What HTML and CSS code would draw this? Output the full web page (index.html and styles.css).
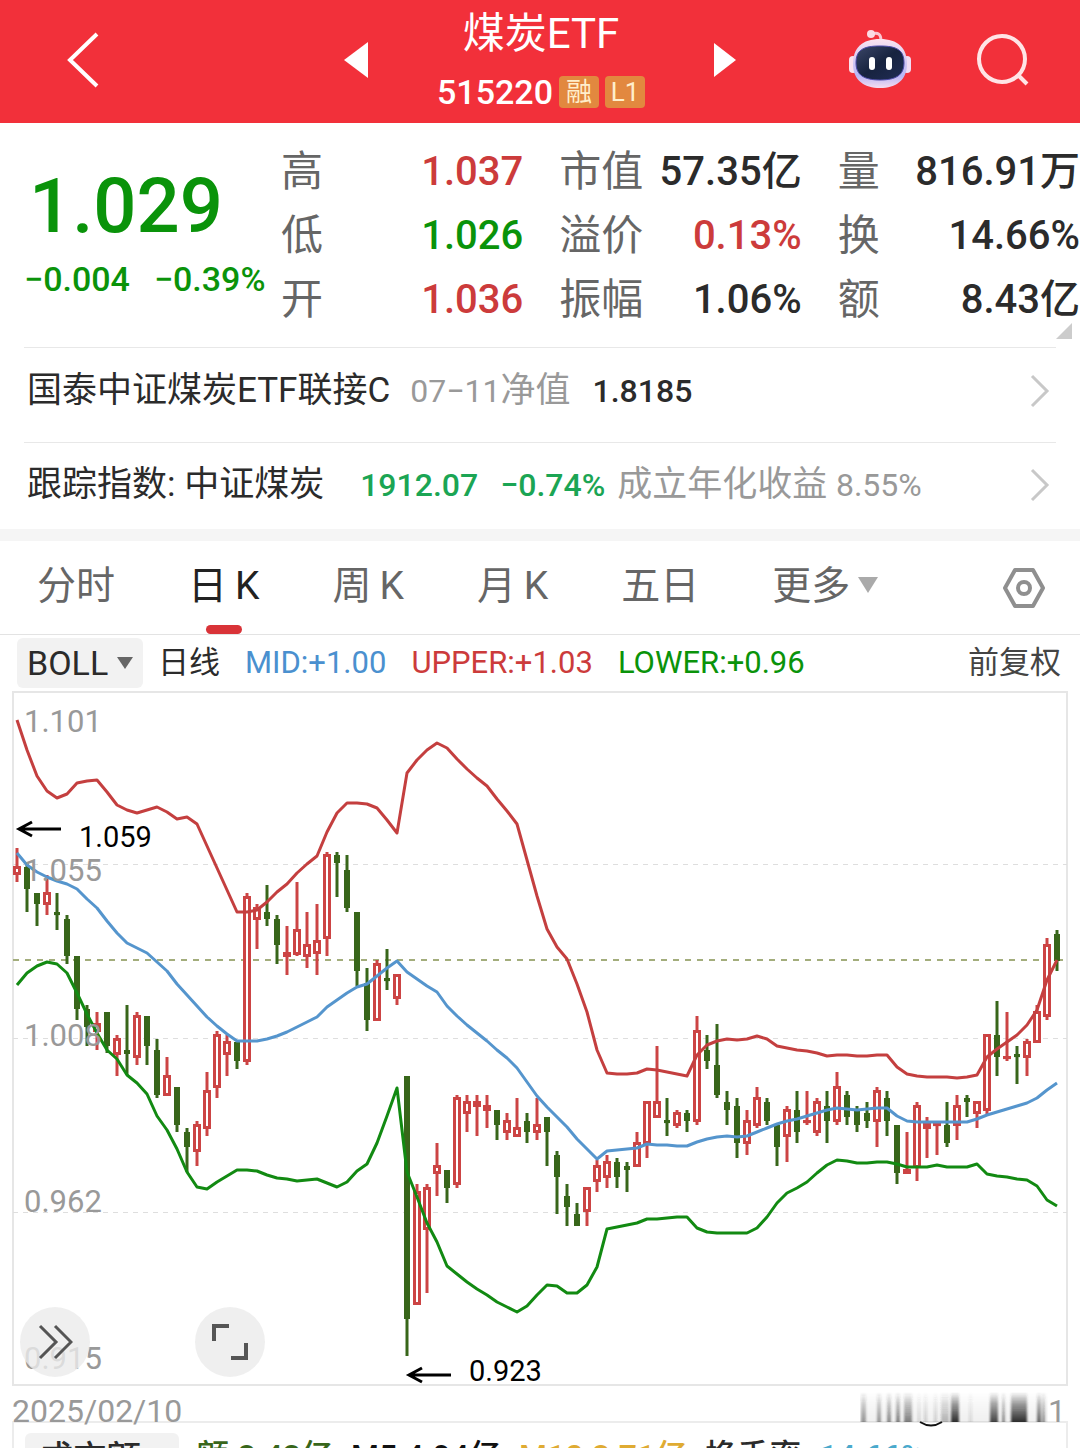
FILE: index.html
```html
<!DOCTYPE html>
<html lang="zh-CN">
<head>
    <meta charset="UTF-8">
    <meta name="viewport" content="width=device-width, initial-scale=1.0">
    <title>煤炭ETF 515220</title>
    <link rel="stylesheet" href="styles.css">
</head>
<body>
    <div class="app">
        <header class="header">
            <button class="icon-button back" aria-label="返回">
                <svg width="34" height="58" viewBox="0 0 34 58"><path d="M31 3 L4 29 L31 55" fill="none" stroke="#fff" stroke-width="4"/></svg>
            </button>
            <div class="switcher">
                <button class="icon-button" aria-label="上一只">
                    <svg width="24" height="36" viewBox="0 0 24 36"><path d="M0 18 L24 0 V36 Z" fill="#fff"/></svg>
                </button>
                <div class="title">
                    <h1>煤炭ETF</h1>
                    <div class="code">515220 <span class="tag">融</span><span class="tag">L1</span></div>
                </div>
                <button class="icon-button" aria-label="下一只">
                    <svg width="22" height="34" viewBox="0 0 22 34"><path d="M22 17 L0 0 V34 Z" fill="#fff"/></svg>
                </button>
            </div>
            <div class="actions">
                <button class="icon-button" aria-label="智能助手">
                    <svg width="64" height="60" viewBox="0 0 64 60">
                        <defs>
                            <linearGradient id="shell" x1="0" y1="0" x2="0" y2="1">
                                <stop offset="0" stop-color="#fbe3f0"/>
                                <stop offset="0.75" stop-color="#b9b6f5"/>
                                <stop offset="1" stop-color="#f6dcf0"/>
                            </linearGradient>
                            <linearGradient id="face" x1="0" y1="0" x2="1" y2="1">
                                <stop offset="0" stop-color="#3b4668"/>
                                <stop offset="0.5" stop-color="#17233f"/>
                                <stop offset="1" stop-color="#202c55"/>
                            </linearGradient>
                        </defs>
                        <path d="M24 4 C30 2 33 4 33 11" fill="none" stroke="#fbc6d2" stroke-width="3"/>
                        <circle cx="23" cy="4" r="4" fill="#fbdbe4"/>
                        <rect x="1" y="26" width="8" height="17" rx="4" fill="#fbe0ec"/>
                        <rect x="55" y="26" width="8" height="17" rx="4" fill="#f1dcf4"/>
                        <path d="M32 9 C50 9 59 18 59 34 C59 50 48 58 32 58 C16 58 5 50 5 34 C5 18 14 9 32 9 Z" fill="url(#shell)"/>
                        <path d="M32 16 C49 16 56 20 56 33 C56 45 48 50 32 50 C16 50 8 45 8 33 C8 20 15 16 32 16 Z" fill="url(#face)" stroke="#4c4aa8" stroke-width="1"/>
                        <rect x="21" y="27" width="6" height="13" rx="3" fill="#fff"/>
                        <rect x="38" y="27" width="6" height="13" rx="3" fill="#fff"/>
                    </svg>
                </button>
                <button class="icon-button" aria-label="搜索">
                    <svg width="54" height="54" viewBox="0 0 54 54"><circle cx="26" cy="26" r="23" fill="none" stroke="#ffe4e6" stroke-width="4"/><path d="M42 42 L51 51" stroke="#ffe4e6" stroke-width="4"/></svg>
                </button>
            </div>
        </header>

        <section class="quote">
            <div class="price down">
                <div class="last">1.029</div>
                <div class="change"><span>−0.004</span><span>−0.39%</span></div>
            </div>
            <dl class="stats">
                <div class="stat"><dt>高</dt><dd class="up">1.037</dd></div>
                <div class="stat"><dt>市值</dt><dd>57.35亿</dd></div>
                <div class="stat"><dt>量</dt><dd>816.91万</dd></div>
                <div class="stat"><dt>低</dt><dd class="down">1.026</dd></div>
                <div class="stat"><dt>溢价</dt><dd class="up">0.13%</dd></div>
                <div class="stat"><dt>换</dt><dd>14.66%</dd></div>
                <div class="stat"><dt>开</dt><dd class="up">1.036</dd></div>
                <div class="stat"><dt>振幅</dt><dd>1.06%</dd></div>
                <div class="stat"><dt>额</dt><dd>8.43亿</dd></div>
            </dl>
            <span class="corner"></span>
        </section>

        <section class="links">
            <a class="link" href="#fund">
                <span class="name">国泰中证煤炭ETF联接C</span>
                <span class="muted fund-date"><span class="num">07−11</span>净值</span>
                <span class="num fund-value">1.8185</span>
                <svg class="chevron" width="20" height="34" viewBox="0 0 20 34"><path d="M2 2 L17 17 L2 32" fill="none" stroke="#c8c8c8" stroke-width="3"/></svg>
            </a>
            <a class="link" href="#index">
                <span class="name">跟踪指数: 中证煤炭</span>
                <span class="num rise index-value">1912.07</span>
                <span class="num rise index-change">−0.74%</span>
                <span class="muted index-yield">成立年化收益 <span class="num">8.55%</span></span>
                <svg class="chevron" width="20" height="34" viewBox="0 0 20 34"><path d="M2 2 L17 17 L2 32" fill="none" stroke="#c8c8c8" stroke-width="3"/></svg>
            </a>
        </section>

        <nav class="tabs">
            <button class="tab">分时</button>
            <button class="tab active">日&thinsp;K</button>
            <button class="tab">周&thinsp;K</button>
            <button class="tab">月&thinsp;K</button>
            <button class="tab">五日</button>
            <button class="tab more">更多<span class="caret"></span></button>
            <button class="icon-button settings" aria-label="设置">
                <svg width="44" height="40" viewBox="0 0 44 40"><path d="M13 2 H31 L41 20 L31 38 H13 L3 20 Z" fill="none" stroke="#8f8f8f" stroke-width="4" stroke-linejoin="round"/><circle cx="22" cy="20" r="6" fill="none" stroke="#8f8f8f" stroke-width="4"/></svg>
            </button>
        </nav>

        <div class="indicator">
            <label class="picker">
                <select aria-label="指标"><option>BOLL</option><option>MA</option></select>
                <span class="caret dark"></span>
            </label>
            <span class="period">日线</span>
            <span class="mid">MID:+1.00</span>
            <span class="up">UPPER:+1.03</span>
            <span class="down">LOWER:+0.96</span>
            <button class="adjust">前复权</button>
        </div>

        <div class="chart">
            <svg id="kline" viewBox="0 691 1080 695"></svg>
            <button class="round expand" aria-label="展开">
                <svg width="36" height="36" viewBox="0 0 36 36"><path d="M3 2 L19 18 L3 34 M18 2 L34 18 L18 34" fill="none" stroke="#555" stroke-width="3"/></svg>
            </button>
            <button class="round full" aria-label="全屏">
                <svg width="36" height="36" viewBox="0 0 36 36"><path d="M2 17 V2 H17 M34 19 V34 H19" fill="none" stroke="#555" stroke-width="4"/></svg>
            </button>
        </div>

        <div class="dates">
            <span>2025/02/10</span>
            <span class="end"><svg id="smear" width="188" height="36" viewBox="0 0 188 36"></svg>1</span>
        </div>

        <div class="volume">
            <label class="picker">
                <select aria-label="副图"><option>成交额</option><option>成交量</option></select>
            </label>
            <span class="amount">额:8.43亿</span>
            <span class="m5">M5:4.94亿</span>
            <span class="m10">M10:8.71亿</span>
            <span>换手率</span>
            <span class="turnover">14.66%</span>
        </div>
    </div>
    <script src="chart.js"></script>
</body>
</html>
```

FILE: styles.css
```css
* {
    box-sizing: border-box;
}
body {
    margin: 0;
    background: #fff;
    color: #2b2b2b;
    font-family: Roboto, "Noto Sans CJK SC", sans-serif;
}
button,
select {
    padding: 0;
    border: none;
    background: none;
    color: inherit;
    font: inherit;
    appearance: none;
    cursor: pointer;
}
.app {
    height: 100vh;
    overflow: hidden;
}
.icon-button {
    display: flex;
}
.up {
    color: #cc3b3b;
}
.down {
    color: #0a930a;
}
.mid {
    color: #4a90cf;
}
.rise {
    color: #1ba554;
}
.muted {
    color: #999;
}
.num {
    font-size: 32px;
}

/* header */
.header {
    display: grid;
    grid-template-columns: 1fr auto 1fr;
    align-items: center;
    height: 123px;
    padding-bottom: 4px;
    background: #f2303a;
    color: #fff;
}
.back {
    padding-left: 66px;
}
.switcher {
    display: flex;
    align-items: center;
    justify-content: space-between;
    width: 392px;
}
.title {
    padding-top: 4px;
    text-align: center;
}
h1 {
    margin: 0;
    font-size: 42px;
    font-weight: 400;
    line-height: 60px;
}
.code {
    display: flex;
    align-items: center;
    gap: 6px;
    font-size: 34px;
    font-weight: 500;
    line-height: 56px;
}
.tag {
    width: 40px;
    border-radius: 4px;
    background: #e2883f;
    color: #ffeecb;
    font-size: 26px;
    font-weight: 400;
    line-height: 32px;
    text-align: center;
}
.actions {
    display: flex;
    align-items: center;
    justify-content: flex-end;
    gap: 64px;
    padding-right: 50px;
}

/* quote */
.quote {
    display: flex;
    position: relative;
    height: 224px;
    padding-top: 17px;
}
.price {
    width: 281px;
    padding-top: 19px;
}
.last {
    padding-left: 29px;
    font-size: 76px;
    font-weight: 500;
    line-height: 94px;
}
.change {
    display: flex;
    gap: 24px;
    padding-left: 24px;
    font-size: 34px;
    font-weight: 500;
    line-height: 52px;
}
.stats {
    display: grid;
    grid-template-columns: repeat(3, 1fr);
    gap: 0 36px;
    flex: 1;
    align-content: start;
    margin: 0;
    font-size: 40px;
    line-height: 64px;
}
.stat {
    display: flex;
    justify-content: space-between;
    white-space: nowrap;
}
.stat dt {
    color: #666;
    font-size: 42px;
}
.stat dd {
    margin: 0;
    font-weight: 500;
}
.corner {
    position: absolute;
    right: 8px;
    bottom: 8px;
    border-left: 16px solid transparent;
    border-bottom: 16px solid #ccc;
}

/* related fund and index */
.links {
    padding: 0 24px;
    border-bottom: 12px solid #f5f5f5;
}
.link {
    display: flex;
    align-items: center;
    height: 95px;
    padding: 0 6px 8px 3px;
    border-top: 1px solid #e8e8e8;
    color: inherit;
    font-size: 35px;
    line-height: 48px;
    text-decoration: none;
    white-space: nowrap;
}
.link + .link {
    height: 87px;
    padding-bottom: 2px;
}
.fund-date {
    margin-left: 20px;
}
.fund-value {
    margin-left: 22px;
    font-weight: 500;
}
.index-value {
    margin-left: 36px;
    font-weight: 500;
}
.index-change {
    margin-left: 22px;
    font-weight: 500;
}
.index-yield {
    margin-left: 12px;
}
.chevron {
    margin-left: auto;
}

/* tabs */
.tabs {
    display: flex;
    align-items: center;
    gap: 73px;
    height: 94px;
    padding: 0 34px 0 37px;
    border-bottom: 1px solid #e3e3e3;
    color: #666;
    font-size: 39px;
}
.tab {
    position: relative;
    height: 93px;
    padding-bottom: 4px;
    line-height: 48px;
    white-space: nowrap;
}
.tab.active {
    color: #222;
}
.tab.active::after {
    content: "";
    position: absolute;
    left: 50%;
    bottom: 0;
    width: 36px;
    height: 9px;
    margin-left: -18px;
    border-radius: 5px;
    background: #d93338;
}
.caret {
    display: inline-block;
    margin-left: 8px;
    border: 10px solid transparent;
    border-top: 16px solid #aaa;
    border-bottom: none;
    vertical-align: 6px;
}
.caret.dark {
    border-width: 12px 8px 0;
    border-top-color: #666;
}
.settings {
    margin-left: auto;
}

/* indicator line */
.indicator {
    display: flex;
    align-items: center;
    gap: 25px;
    height: 56px;
    padding: 0 19px 0 17px;
    font-size: 31px;
    line-height: 40px;
    white-space: nowrap;
}
.picker {
    display: flex;
    align-items: center;
    height: 50px;
    padding: 0 10px;
    border-radius: 6px;
    background: #f2f2f2;
    font-size: 34px;
}
.period {
    margin-left: -10px;
}
.adjust {
    margin-left: auto;
    color: #444;
}

/* chart */
.chart {
    position: relative;
}
.chart > svg {
    display: block;
    width: 100%;
}
.frame {
    fill: none;
    stroke: #e6e6e6;
    stroke-width: 2;
}
.grid-line {
    stroke: #dedede;
    stroke-dasharray: 5 5;
}
.last-line {
    stroke: #a3ad7c;
    stroke-width: 2;
    stroke-dasharray: 6 6;
}
.candle-up {
    fill: #fff;
    stroke: #cc4444;
    stroke-width: 3;
}
.candle-down {
    fill: #38661a;
    stroke: #38661a;
    stroke-width: 3;
}
.band {
    fill: none;
    stroke-width: 3;
    stroke-linejoin: round;
}
.band-upper {
    stroke: #c43f3f;
}
.band-mid {
    stroke: #5595cd;
}
.band-lower {
    stroke: #128a12;
}
.axis-label {
    fill: #999;
    font-size: 31px;
}
.mark {
    fill: #000;
    font-size: 29px;
}
.arrow {
    fill: none;
    stroke: #000;
    stroke-width: 3;
}
.round {
    display: flex;
    align-items: center;
    justify-content: center;
    position: absolute;
    bottom: 9px;
    width: 70px;
    height: 70px;
    border-radius: 50%;
    background: rgba(235, 235, 235, 0.8);
}
.expand {
    left: 20px;
}
.full {
    left: 195px;
}

/* dates and turnover */
.dates {
    display: flex;
    justify-content: space-between;
    height: 35px;
    padding: 0 14px 0 12px;
    color: #999;
    font-size: 32px;
    line-height: 50px;
}
.end {
    display: flex;
}
.end svg {
    margin-top: 6px;
}
.volume {
    display: flex;
    align-items: flex-start;
    gap: 18px;
    margin: 0 12px;
    padding: 10px 11px 0;
    border: 2px solid #ececec;
    font-size: 32px;
    font-weight: 500;
    line-height: 46px;
    white-space: nowrap;
}
.volume .picker {
    width: 154px;
    padding: 0 14px;
}
.amount {
    color: #38661a;
}
.m5 {
    color: #111;
}
.m10 {
    color: #dfab32;
}
.turnover {
    color: #4aa9cc;
}
```

FILE: chart.js
```js
const NS = 'http://www.w3.org/2000/svg';
const START = 17;
const STEP = 10;

// [up?, high, low, body top, body bottom]
const candles = [
    [1,848,882,866,875],[0,863,912,867,889],[0,893,926,893,904],[1,875,915,892,905],[0,893,930,912,914],
    [0,915,964,919,956],[0,956,1020,956,1009],[0,1005,1046,1009,1027],[1,1012,1050,1023,1032],[0,1012,1053,1012,1046],
    [1,1035,1076,1038,1055],[0,1005,1075,1050,1054],[1,1012,1065,1015,1058],[0,1016,1065,1016,1046],[0,1039,1098,1050,1095],
    [1,1057,1096,1075,1096],[0,1087,1132,1087,1125],[0,1128,1172,1132,1147],[1,1121,1166,1124,1152],[1,1072,1136,1090,1129],
    [1,1031,1098,1034,1088],[1,1035,1076,1041,1055],[0,1042,1069,1042,1061],[1,893,1065,896,1062],[1,904,949,907,920],
    [0,885,926,912,919],[0,915,964,919,945],[1,926,975,952,957],[1,882,956,929,955],[1,912,968,944,957],
    [1,904,975,940,954],[1,852,956,854,939],[0,852,897,855,863],[0,855,912,870,908],[0,912,986,912,971],
    [0,968,1031,983,1020],[1,960,1021,963,1021],[0,949,990,978,980],[1,974,1005,974,999],[0,1076,1356,1076,1319],
    [1,1184,1305,1191,1305],[1,1184,1293,1187,1230],[1,1143,1196,1165,1174],[0,1170,1203,1170,1188],[1,1095,1188,1097,1185],
    [1,1095,1132,1101,1114],[1,1095,1136,1101,1107],[1,1095,1128,1105,1111],[0,1110,1140,1110,1125],[1,1113,1140,1120,1133],
    [1,1098,1137,1127,1137],[0,1113,1143,1121,1132],[1,1098,1140,1124,1133],[0,1117,1166,1117,1132],[0,1151,1214,1155,1177],
    [0,1184,1226,1196,1207],[0,1203,1226,1214,1226],[1,1187,1226,1187,1212],[1,1160,1192,1165,1182],[1,1155,1188,1161,1178],
    [0,1158,1188,1162,1177],[0,1162,1192,1166,1170],[1,1132,1167,1142,1167],[1,1101,1158,1101,1144],[1,1046,1118,1101,1118],
    [0,1098,1136,1120,1122],[1,1110,1128,1112,1126],[0,1110,1132,1113,1121],[1,1016,1125,1030,1122],[0,1035,1069,1050,1061],
    [0,1024,1098,1065,1095],[0,1091,1125,1102,1110],[0,1098,1158,1106,1143],[1,1110,1155,1120,1144],[1,1087,1128,1097,1126],
    [0,1098,1125,1102,1121],[0,1125,1166,1125,1147],[1,1106,1162,1109,1137],[0,1091,1143,1110,1132],[1,1091,1125,1120,1122],
    [1,1098,1136,1101,1133],[0,1091,1143,1106,1121],[1,1072,1125,1086,1122],[0,1091,1125,1095,1117],[0,1106,1132,1109,1125],
    [0,1102,1128,1113,1121],[1,1087,1147,1090,1122],[0,1091,1136,1098,1121],[0,1125,1184,1125,1173],[1,1132,1174,1169,1174],
    [1,1102,1181,1105,1168],[1,1117,1158,1123,1129],[1,1121,1155,1123,1126],[0,1102,1147,1125,1143],[1,1095,1140,1105,1126],
    [0,1095,1117,1098,1102],[1,1101,1128,1101,1114],[1,1034,1114,1034,1111],[0,1001,1076,1035,1057],[1,1012,1061,1056,1058],
    [0,1046,1084,1054,1057],[1,1039,1076,1041,1058],[1,1005,1043,1011,1043],[1,938,1020,944,1017],[0,930,971,934,961]
];

const bands = {
    lower: [985,973,966,962,964,973,993,1014,1033,1050,1059,1075,1083,1094,1116,1130,1149,1172,1187,1189,1182,1176,1170,1170,1171,1175,1178,1179,1181,1180,1179,1183,1187,1182,1171,1164,1143,1116,1088,1172,1197,1223,1242,1266,1274,1282,1289,1295,1302,1307,1312,1306,1295,1285,1286,1293,1293,1285,1267,1229,1227,1225,1223,1219,1219,1218,1217,1217,1228,1232,1233,1233,1233,1233,1228,1217,1203,1193,1188,1182,1173,1165,1160,1161,1163,1163,1162,1162,1164,1167,1167,1167,1165,1167,1167,1167,1164,1174,1176,1177,1179,1180,1186,1200,1206],
    mid: [853,865,872,877,881,884,889,899,908,921,933,943,948,953,962,971,984,995,1006,1017,1026,1034,1041,1041,1041,1039,1036,1032,1027,1022,1017,1007,1000,993,987,984,976,968,961,972,979,986,992,1006,1016,1025,1033,1041,1050,1058,1068,1082,1096,1107,1117,1127,1139,1149,1159,1151,1150,1149,1148,1144,1145,1145,1146,1146,1142,1139,1137,1136,1137,1136,1132,1128,1124,1121,1119,1116,1113,1110,1108,1109,1110,1109,1108,1108,1116,1121,1122,1122,1122,1122,1122,1122,1119,1115,1112,1109,1106,1103,1098,1090,1083],
    upper: [720,750,776,791,798,794,783,781,780,792,805,810,813,810,807,812,819,817,824,846,868,890,912,912,910,902,892,884,873,864,856,832,813,803,803,804,808,820,833,773,760,750,743,748,759,769,778,786,799,811,824,860,896,929,947,959,984,1012,1050,1073,1074,1074,1073,1069,1070,1072,1074,1076,1055,1045,1041,1039,1040,1039,1036,1039,1046,1048,1050,1051,1053,1056,1055,1055,1056,1056,1055,1055,1067,1074,1076,1077,1077,1077,1078,1077,1075,1057,1049,1042,1035,1025,1010,980,960]
};

function add(parent, name, attrs, text) {
    const el = document.createElementNS(NS, name);
    for (const key in attrs) {
        el.setAttribute(key, attrs[key]);
    }
    if (text) {
        el.textContent = text;
    }
    parent.appendChild(el);
    return el;
}

const kline = document.getElementById('kline');

add(kline, 'rect', { class: 'frame', x: 13, y: 692, width: 1054, height: 693 });
[864.5, 1038.5, 1212.5].forEach(y => {
    add(kline, 'line', { class: 'grid-line', x1: 13, x2: 1067, y1: y, y2: y });
});
add(kline, 'line', { class: 'last-line', x1: 13, x2: 1067, y1: 960, y2: 960 });

candles.forEach(([up, high, low, top, bottom], i) => {
    const x = START + i * STEP;
    const group = add(kline, 'g', { class: up ? 'candle-up' : 'candle-down' });
    add(group, 'line', { x1: x, x2: x, y1: high, y2: low });
    // the outline is 3 wide, so the body is inset by half of it
    const half = up ? 2.5 : 1.5;
    add(group, 'rect', { x: x - half, y: top + 1.5, width: half * 2, height: Math.max(bottom - top - 3, 0.1) });
});

for (const name in bands) {
    const points = bands[name].map((y, i) => (START + i * STEP) + ',' + y).join(' ');
    add(kline, 'polyline', { class: 'band band-' + name, points });
}

[['1.101', 732], ['1.055', 881], ['1.008', 1046], ['0.962', 1212], ['0.915', 1369]].forEach(([label, y]) => {
    add(kline, 'text', { class: 'axis-label', x: 24, y }, label);
});

[['1.059', 17, 829, 847], ['0.923', 407, 1375, 1381]].forEach(([label, x, y, base]) => {
    add(kline, 'path', { class: 'arrow', d: `M${x + 44} ${y} H${x + 2} M${x + 15} ${y - 7} L${x + 2} ${y} L${x + 15} ${y + 7}` });
    add(kline, 'text', { class: 'mark', x: x + 62, y: base }, label);
});

// faded bars over the end date: [x, width, opacity]
const smear = document.getElementById('smear');
const defs = add(smear, 'defs', {});
const fade = add(defs, 'linearGradient', { id: 'fade', x1: 0, y1: 0, x2: 0, y2: 1 });
add(fade, 'stop', { offset: 0, 'stop-color': '#333', 'stop-opacity': 0 });
add(fade, 'stop', { offset: 0.4, 'stop-color': '#333', 'stop-opacity': 0.5 });
add(fade, 'stop', { offset: 1, 'stop-color': '#222', 'stop-opacity': 1 });
const soft = add(defs, 'filter', { id: 'soft' });
add(soft, 'feGaussianBlur', { stdDeviation: '1.2 0' });
const bars = add(smear, 'g', { filter: 'url(#soft)' });
[[0,188,.06],[1,5,.45],[17,4,.45],[27,4,.5],[36,4,.55],[44,8,.55],[58,2,.2],[64,3,.2],[74,3,.2],[81,8,.3],[91,8,.95],[109,3,.15],[130,8,.85],[142,3,.5],[151,16,.95],[177,4,.7],[182,3,.5]].forEach(([x, width, opacity]) => {
    add(bars, 'rect', { x, y: 0, width, height: 30, fill: 'url(#fade)', opacity });
});
add(smear, 'path', { d: 'M60 30 Q71 37 82 30', fill: 'none', stroke: '#111', 'stroke-width': 2 });
```
